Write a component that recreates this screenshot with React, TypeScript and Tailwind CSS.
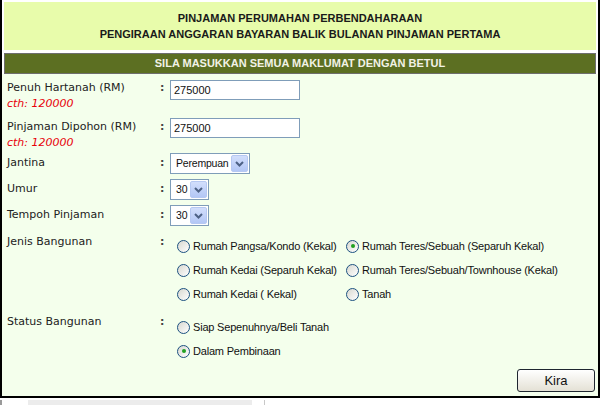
import React from "react";

const Radio = ({ checked }: { checked?: boolean }) => (
  <span className="relative inline-block w-[13px] h-[13px] rounded-full border border-[#1c5180] bg-linear-to-br from-[#d8d8d0] to-white shrink-0">
    {checked && (
      <span className="absolute left-[3.5px] top-[3.5px] w-[4px] h-[4px] rounded-full bg-[#21a121]" />
    )}
  </span>
);

const RadioItem = ({ label, checked }: { label: string; checked?: boolean }) => (
  <div className="flex items-center gap-[3px] h-[24px]">
    <Radio checked={checked} />
    <span className="text-[11px] tracking-[-0.2px] text-[#111]">{label}</span>
  </div>
);

const Select = ({ value, w }: { value: string; w: string }) => (
  <div className={`flex items-center h-[21px] border border-[#7f9db9] bg-white ${w}`}>
    <span className="flex-1 pl-[5px] text-[10.5px] tracking-[-0.2px] text-[#111] whitespace-nowrap">{value}</span>
    <span className="w-[17px] h-[17px] mr-[1px] shrink-0 rounded-[2px] border border-[#b6c8f2] bg-linear-to-b from-[#d2defc] to-[#b3c7f5] flex items-center justify-center">
      <svg width="9" height="6" viewBox="0 0 9 6">
        <path d="M1 1 L4.5 4.5 L8 1" fill="none" stroke="#4d6185" strokeWidth="2" />
      </svg>
    </span>
  </div>
);

const Label = ({ children }: { children: React.ReactNode }) => (
  <div className="font-['DejaVu_Sans',sans-serif] text-[11px] leading-[16px] text-[#222]">{children}</div>
);

const Colon = () => (
  <div className="font-['DejaVu_Sans',sans-serif] text-[11px] leading-[16px] font-bold text-[#444]">:</div>
);

const Hint = () => (
  <div className="font-['DejaVu_Sans',sans-serif] text-[11px] leading-[16px] italic text-[#e8000b]">cth: 120000</div>
);

export default function App() {
  return (
    <div className="w-[605px] h-[406px] bg-white overflow-hidden font-['Liberation_Sans',Arial,sans-serif]">
      <div className="w-[600px] border-x-2 border-b-2 border-black bg-white">
        <div className="px-[2px] pt-[2px] flex flex-col gap-[3px]">
          <div className="h-[48px] bg-[#e8fcab] flex flex-col items-center justify-center text-[11px] leading-[16px] font-bold text-[#1a1a1a]">
            <div>PINJAMAN PERUMAHAN PERBENDAHARAAN</div>
            <div>PENGIRAAN ANGGARAN BAYARAN BALIK BULANAN PINJAMAN PERTAMA</div>
          </div>
          <div className="h-[21px] bg-[#5c6f22] border border-[#6e6e6e] flex items-center justify-center text-[11px] font-bold text-[#f2f2e6]">
            SILA MASUKKAN SEMUA MAKLUMAT DENGAN BETUL
          </div>
        </div>

        <div className="bg-[#f4ffec] pt-[6px] pl-[5px] pr-[3px] pb-[4px] flex flex-col">
          <div className="grid grid-cols-[153px_10px_1fr] h-[38px]">
            <div>
              <Label>Penuh Hartanah (RM)</Label>
              <Hint />
            </div>
            <Colon />
            <input
              readOnly
              value="275000"
              className="w-[130px] h-[20px] border border-[#7f9db9] bg-white px-[3px] text-[11px] text-[#111] outline-none"
            />
          </div>

          <div className="grid grid-cols-[153px_10px_1fr] h-[35px]">
            <div className="pt-[1px]">
              <Label>Pinjaman Dipohon (RM)</Label>
              <Hint />
            </div>
            <div className="pt-[1px]">
              <Colon />
            </div>
            <input
              readOnly
              value="275000"
              className="w-[130px] h-[20px] border border-[#7f9db9] bg-white px-[3px] text-[11px] text-[#111] outline-none"
            />
          </div>

          <div className="grid grid-cols-[153px_10px_1fr] h-[26px]">
            <div className="pt-[2px]">
              <Label>Jantina</Label>
            </div>
            <div className="pt-[2px]">
              <Colon />
            </div>
            <Select value="Perempuan" w="w-[80px]" />
          </div>

          <div className="grid grid-cols-[153px_10px_1fr] h-[26px]">
            <div className="pt-[2px]">
              <Label>Umur</Label>
            </div>
            <div className="pt-[2px]">
              <Colon />
            </div>
            <Select value="30" w="w-[39px]" />
          </div>

          <div className="grid grid-cols-[153px_10px_1fr] h-[29px]">
            <div className="pt-[2px]">
              <Label>Tempoh Pinjaman</Label>
            </div>
            <div className="pt-[2px]">
              <Colon />
            </div>
            <Select value="30" w="w-[39px]" />
          </div>

          <div className="grid grid-cols-[153px_10px_1fr] h-[80px]">
            <Label>Jenis Bangunan</Label>
            <Colon />
            <div className="pl-[7px] grid grid-cols-[169px_1fr] content-start">
              <RadioItem label="Rumah Pangsa/Kondo (Kekal)" />
              <RadioItem label="Rumah Teres/Sebuah (Separuh Kekal)" checked />
              <RadioItem label="Rumah Kedai (Separuh Kekal)" />
              <RadioItem label="Rumah Teres/Sebuah/Townhouse (Kekal)" />
              <RadioItem label="Rumah Kedai ( Kekal)" />
              <RadioItem label="Tanah" />
            </div>
          </div>

          <div className="grid grid-cols-[153px_10px_1fr] h-[49px]">
            <Label>Status Bangunan</Label>
            <Colon />
            <div className="pl-[7px] pt-[1px] flex flex-col">
              <RadioItem label="Siap Sepenuhnya/Beli Tanah" />
              <RadioItem label="Dalam Pembinaan" checked />
            </div>
          </div>

          <div className="flex justify-end mt-[6px]">
            <button className="w-[78px] h-[23px] rounded-[3px] border border-[#1f2630] bg-linear-to-b from-white to-[#e4e1d5] text-[13px] text-[#111]">
              Kira
            </button>
          </div>
        </div>
      </div>

      <div className="mt-[2px] h-[5px] flex">
        <div className="w-[2px] bg-[#9a9a9a]" />
        <div className="ml-[26px] w-[224px] bg-[#ececec]" />
        <div className="ml-[12px] w-[1px] bg-[#c8c8c8]" />
      </div>
    </div>
  );
}
